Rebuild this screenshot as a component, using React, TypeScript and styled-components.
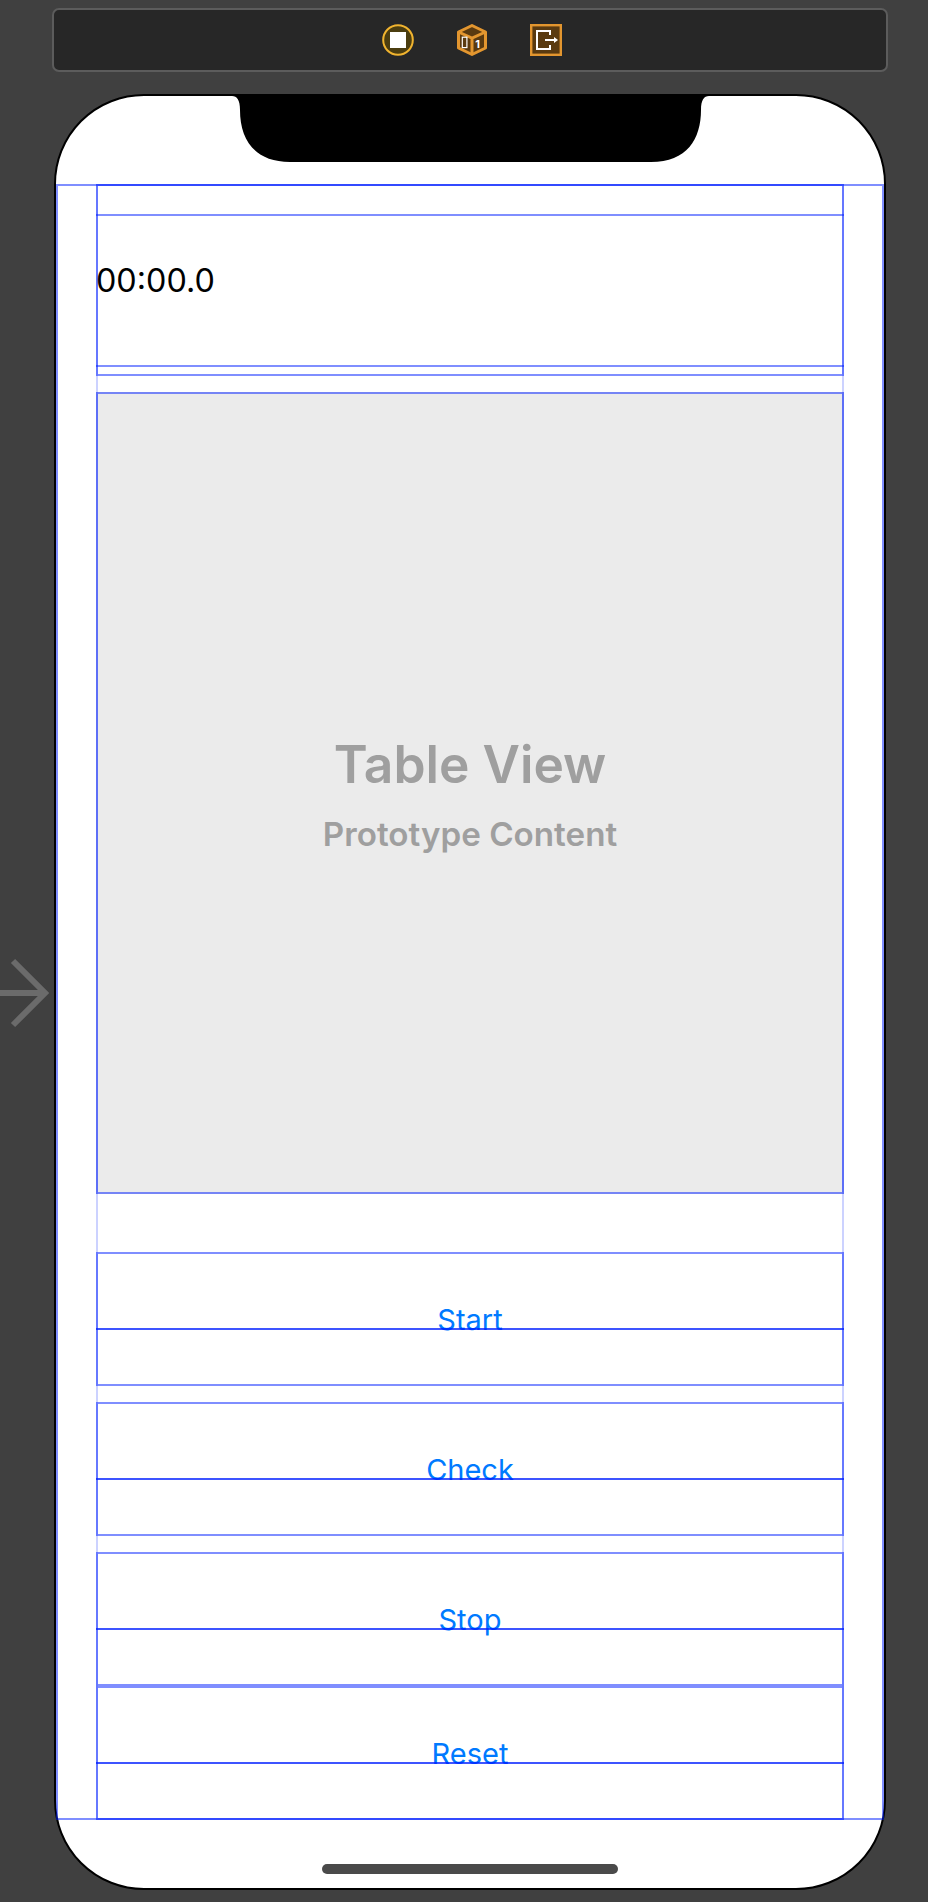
import React from "react";
import styled, { createGlobalStyle } from "styled-components";

const Global = createGlobalStyle`
  html, body { margin: 0; padding: 0; background: #404040; }
  * { box-sizing: border-box; }
`;

const line = "rgba(0, 30, 255, 0.5)";
const lineStrong = "rgba(0, 30, 255, 0.76)";
const lineFaint = "rgba(0, 30, 255, 0.2)";

const Page = styled.div`
  width: 928px;
  height: 1902px;
  padding-top: 8px;
  background: #404040;
  position: relative;
  overflow: hidden;
  font-family: Inter, "Liberation Sans", sans-serif;
`;

const Toolbar = styled.div`
  width: 836px;
  height: 64px;
  margin-left: 52px;
  padding-left: 4px;
  display: flex;
  justify-content: center;
  align-items: center;
  gap: 42px;
  background: #272727;
  border: 2px solid #5c5c5c;
  border-radius: 7px;
`;

const ToolIcon = styled.svg`
  display: block;
  width: 32px;
  height: 32px;
`;

const Phone = styled.div`
  position: relative;
  width: 832px;
  height: 1796px;
  margin: 22px 0 0 54px;
  padding-top: 88px;
  background: #fff;
  border: 2px solid #000;
  border-radius: 90px;
`;

const Notch = styled.svg`
  position: absolute;
  top: -2px;
  left: 176px;
  width: 477px;
  height: 68px;
`;

const HomeIndicator = styled.div`
  position: absolute;
  left: 266px;
  bottom: 14px;
  width: 296px;
  height: 10px;
  border-radius: 5px;
  background: #4a4a4a;
`;

const SafeArea = styled.div`
  position: relative;
  height: 1636px;
  &::before {
    content: "";
    position: absolute;
    inset: 0;
    border: 2px solid ${line};
    pointer-events: none;
  }
`;

const Column = styled.div`
  position: relative;
  height: 100%;
  margin: 0 40px;
  display: flex;
  flex-direction: column;
  &::before {
    content: "";
    position: absolute;
    inset: 0;
    border: 2px solid ${lineFaint};
    pointer-events: none;
  }
`;

const TimerStack = styled.div`
  height: 192px;
  padding-top: 28px;
  border: 2px solid ${line};
`;

const TimerLabel = styled.div`
  height: 153px;
  margin: 0 -2px;
  padding-bottom: 20px;
  display: flex;
  align-items: center;
  border-top: 2px solid ${line};
  border-bottom: 2px solid ${line};
  font-size: 32.3px;
  font-weight: 400;
  color: #000;
`;

const TablePlaceholder = styled.div`
  height: 802px;
  margin-top: 16px;
  display: flex;
  flex-direction: column;
  align-items: center;
  justify-content: center;
  background: #ebebeb;
  border: 2px solid ${line};
  color: #9f9f9f;
  font-weight: 600;
`;

const TableTitle = styled.div`
  font-size: 51.5px;
  line-height: 64px;
`;

const TableSubtitle = styled.div`
  margin-top: 18px;
  font-size: 33.2px;
  line-height: 40px;
`;

const ButtonStack = styled.div`
  margin-top: 58px;
  display: flex;
  flex-direction: column;
`;

const ActionButton = styled.div<{ $gap: number }>`
  position: relative;
  height: 134px;
  margin-bottom: ${(p) => p.$gap}px;
  display: flex;
  align-items: center;
  justify-content: center;
  border: 2px solid ${line};
  font-size: 29px;
  color: #007aff;
  &::after {
    content: "";
    position: absolute;
    left: -2px;
    right: -2px;
    top: 74px;
    height: 2px;
    background: ${lineStrong};
  }
`;

const Arrow = styled.svg`
  position: absolute;
  left: 0;
  top: 955px;
  width: 54px;
  height: 76px;
`;

const StopIcon = () => (
  <ToolIcon viewBox="0 0 32 32">
    <circle cx="16" cy="16" r="14.8" fill="#4b3d10" stroke="#f1b42f" strokeWidth="2" />
    <rect x="8" y="8" width="16" height="16" fill="#fff" />
  </ToolIcon>
);

const CubeIcon = () => (
  <ToolIcon viewBox="0 0 32 32">
    <path d="M16 1.5 29.5 8V24L16 30.5 2.5 24V8Z" fill="#5a3a10" stroke="#e3962f" strokeWidth="3" strokeLinejoin="round" />
    <path d="M2.5 8 16 14 29.5 8M16 14V30.5" fill="none" stroke="#e3962f" strokeWidth="3" />
    <rect x="6.3" y="13.2" width="4.6" height="10.4" fill="none" stroke="#fff" strokeWidth="1.2" />
    <text x="21.5" y="23.5" textAnchor="middle" fontFamily="Inter, sans-serif" fontWeight="700" fontSize="11" fill="#fff">1</text>
  </ToolIcon>
);

const ExitIcon = () => (
  <ToolIcon viewBox="0 0 32 32">
    <rect x="1.2" y="1.2" width="29.6" height="29.6" fill="#5a3a10" stroke="#e3962f" strokeWidth="2.4" />
    <path d="M20 11V7H7V25H20V21" fill="none" stroke="#fff" strokeWidth="2" />
    <path d="M15 16H24" stroke="#fff" strokeWidth="2" />
    <path d="M24 13 28 16 24 19Z" fill="#fff" />
  </ToolIcon>
);

const App = () => (
  <Page>
    <Global />
    <Toolbar>
      <StopIcon />
      <CubeIcon />
      <ExitIcon />
    </Toolbar>
    <Phone>
      <Notch viewBox="0 0 477 68">
        <path d="M0 2C5 2 8 6 8 16 8 45 22 68 58 68H419C455 68 469 45 469 16 469 6 472 2 477 2V0H0Z" fill="#000" />
      </Notch>
      <SafeArea>
        <Column>
          <TimerStack>
            <TimerLabel>00:00.0</TimerLabel>
          </TimerStack>
          <TablePlaceholder>
            <TableTitle>Table View</TableTitle>
            <TableSubtitle>Prototype Content</TableSubtitle>
          </TablePlaceholder>
          <ButtonStack>
            <ActionButton $gap={16}>Start</ActionButton>
            <ActionButton $gap={16}>Check</ActionButton>
            <ActionButton $gap={0}>Stop</ActionButton>
            <ActionButton $gap={0}>Reset</ActionButton>
          </ButtonStack>
        </Column>
      </SafeArea>
      <HomeIndicator />
    </Phone>
    <Arrow viewBox="0 0 54 76">
      <path d="M0 38H44M13 6 45 38 13 70" fill="none" stroke="#6b6b6b" strokeWidth="6" />
    </Arrow>
  </Page>
);

export default App;
